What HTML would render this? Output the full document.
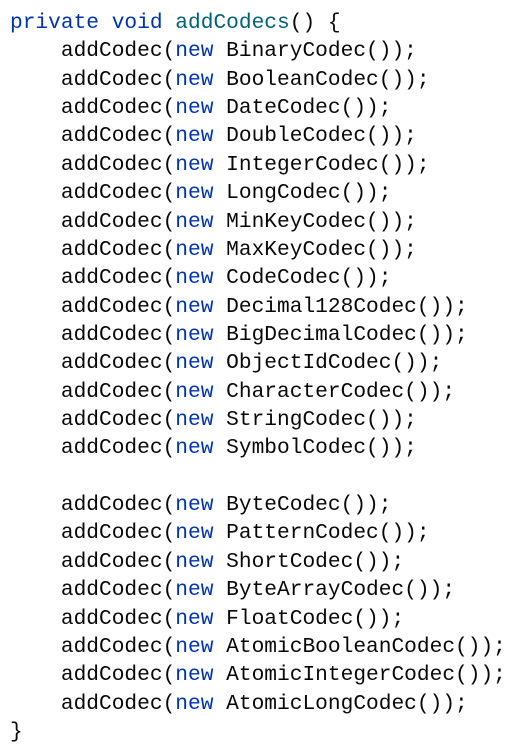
<!DOCTYPE html><html><head><style>
body{margin:0;background:#fff;width:521px;height:755px;overflow:hidden}
pre{margin:0;padding:9px 0 0 10px;font-family:"Liberation Mono",monospace;font-size:21.2px;line-height:28.36px;color:#080808}
.k{color:#0033b3}.m{color:#00627a}
</style></head><body><pre><span class="k">private void</span> <span class="m">addCodecs</span>() {
    addCodec(<span class="k">new</span> BinaryCodec());
    addCodec(<span class="k">new</span> BooleanCodec());
    addCodec(<span class="k">new</span> DateCodec());
    addCodec(<span class="k">new</span> DoubleCodec());
    addCodec(<span class="k">new</span> IntegerCodec());
    addCodec(<span class="k">new</span> LongCodec());
    addCodec(<span class="k">new</span> MinKeyCodec());
    addCodec(<span class="k">new</span> MaxKeyCodec());
    addCodec(<span class="k">new</span> CodeCodec());
    addCodec(<span class="k">new</span> Decimal128Codec());
    addCodec(<span class="k">new</span> BigDecimalCodec());
    addCodec(<span class="k">new</span> ObjectIdCodec());
    addCodec(<span class="k">new</span> CharacterCodec());
    addCodec(<span class="k">new</span> StringCodec());
    addCodec(<span class="k">new</span> SymbolCodec());

    addCodec(<span class="k">new</span> ByteCodec());
    addCodec(<span class="k">new</span> PatternCodec());
    addCodec(<span class="k">new</span> ShortCodec());
    addCodec(<span class="k">new</span> ByteArrayCodec());
    addCodec(<span class="k">new</span> FloatCodec());
    addCodec(<span class="k">new</span> AtomicBooleanCodec());
    addCodec(<span class="k">new</span> AtomicIntegerCodec());
    addCodec(<span class="k">new</span> AtomicLongCodec());
}</pre></body></html>
